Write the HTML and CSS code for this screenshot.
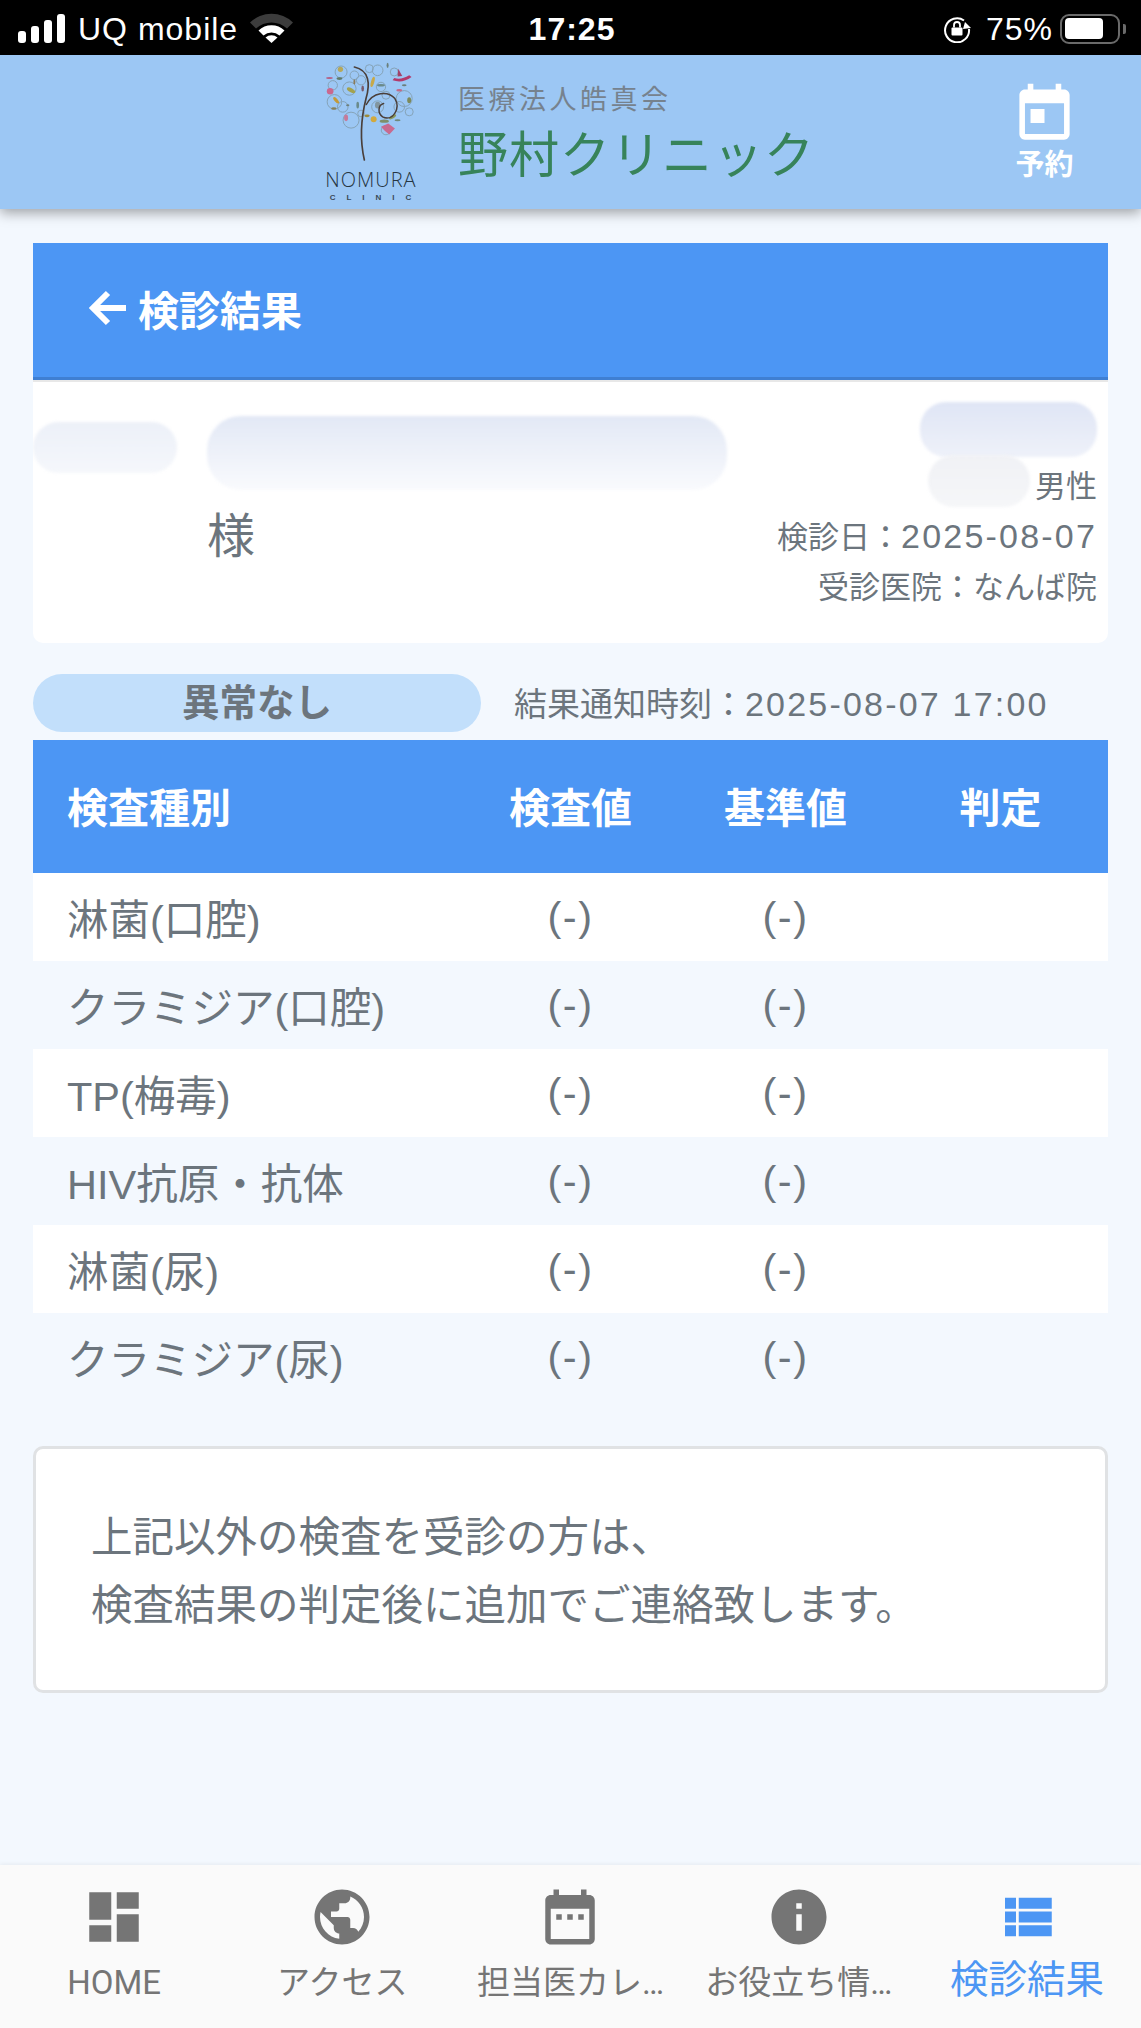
FILE: index.html
```html
<!DOCTYPE html>
<html lang="ja">
<head>
<meta charset="utf-8">
<title>検診結果</title>
<link rel="stylesheet" href="styles.css">
</head>
<body>
<div class="page">
  <div class="statusbar">
    <div class="st-left">
      <span class="signal"><i class="b1"></i><i class="b2"></i><i class="b3"></i><i class="b4"></i></span>
      <span class="carrier">UQ mobile</span>
      <svg class="wifi" viewBox="0 0 43 30"><path d="M0 9.500 A31 31 0 0 1 43 9.500 L37 15.500 A23 23 0 0 0 6 15.500 Z" fill="#3c3c3c"/><path d="M8.500 17.500 A19 19 0 0 1 34.500 17.500 L29.500 22.500 A12 12 0 0 0 13.500 22.500 Z" fill="#fff"/><path d="M15.500 24.500 A9 9 0 0 1 27.500 24.500 L21.500 30 Z" fill="#fff"/></svg>
    </div>
    <div class="st-time">17:25</div>
    <div class="st-right">
      <svg class="lock" viewBox="0 0 28 28"><path d="M21 5.500 A12 12 0 1 0 26 14" fill="none" stroke="#fff" stroke-width="2"/><path d="M22 7 L28 13 L20 14 Z" fill="#fff"/><rect x="8.500" y="12.500" width="11" height="8" rx="1" fill="#fff"/><path d="M11 12.500 V10 A3 3 0 0 1 17 10 V12.500" fill="none" stroke="#fff" stroke-width="1.800"/></svg>
      <span class="pct">75%</span>
      <span class="battery"><span class="battery-fill"></span></span><span class="battery-tip"></span>
    </div>
  </div>

  <header class="appbar">
    <div class="logo">
      <svg class="tree" viewBox="85 40 270 310">
        <g fill="none" stroke="#7f9aa8" stroke-width="3" opacity=".8">
          <circle cx="130" cy="70" r="18"/><circle cx="240" cy="65" r="16"/><circle cx="110" cy="160" r="22"/><circle cx="160" cy="215" r="24"/>
          <circle cx="320" cy="150" r="24"/><circle cx="155" cy="120" r="20"/><circle cx="250" cy="115" r="14"/><circle cx="240" cy="175" r="18"/>
          <circle cx="290" cy="70" r="12"/><circle cx="265" cy="245" r="14"/><circle cx="335" cy="190" r="12"/><circle cx="190" cy="95" r="14"/>
          <circle cx="105" cy="110" r="14"/><circle cx="135" cy="175" r="16"/><circle cx="215" cy="60" r="12"/><circle cx="305" cy="175" r="16"/><circle cx="170" cy="80" r="13"/><circle cx="265" cy="140" r="12"/><circle cx="190" cy="195" r="10"/>
        </g>
        <g>
          <circle cx="97" cy="128" r="10" fill="#c9688f"/><circle cx="128" cy="62" r="8" fill="#b6a85a"/><path d="M285 95 Q315 105 342 85 L335 80 Q310 95 290 88Z" fill="#b23a6c"/>
          <path d="M302 60 L314 82 L300 84Z" fill="#a2406a"/><circle cx="228" cy="212" r="9" fill="#d2a93d"/><path d="M250 235 L272 225 L292 240 L275 258 L262 248Z" fill="#c86a90"/>
          <ellipse cx="160" cy="125" rx="14" ry="6" fill="#a3a24f" transform="rotate(30 160 125)"/><ellipse cx="115" cy="155" rx="12" ry="5" fill="#c39a3a" transform="rotate(50 115 155)"/>
          <ellipse cx="225" cy="100" rx="5" ry="16" fill="#c7a94a" transform="rotate(15 225 100)"/><ellipse cx="260" cy="218" rx="14" ry="5" fill="#7f8f6a"/>
          <ellipse cx="108" cy="180" rx="8" ry="4" fill="#88815a"/><ellipse cx="145" cy="208" rx="6" ry="10" fill="#c77a9a"/><ellipse cx="125" cy="90" rx="9" ry="4" fill="#5f7a6a"/>
          <ellipse cx="208" cy="202" rx="8" ry="4" fill="#9c8a3a"/><ellipse cx="305" cy="125" rx="9" ry="4" fill="#c06a8a"/><ellipse cx="335" cy="155" rx="6" ry="9" fill="#7c8a5a"/>
          <ellipse cx="250" cy="110" rx="12" ry="4" fill="#6a8a8a"/><ellipse cx="270" cy="50" rx="3" ry="8" fill="#6a7f7a"/><ellipse cx="195" cy="120" rx="4" ry="9" fill="#7a5a6a"/>
          <ellipse cx="285" cy="205" rx="12" ry="5" fill="#8a9a5a" transform="rotate(-30 285 205)"/><ellipse cx="180" cy="170" rx="4" ry="10" fill="#6a8a8a"/><ellipse cx="95" cy="88" rx="10" ry="3" fill="#b3658a"/>
          <ellipse cx="240" cy="170" rx="8" ry="10" fill="#8296a0"/><ellipse cx="150" cy="170" rx="5" ry="3" fill="#6d7f7a"/><ellipse cx="320" cy="110" rx="7" ry="3" fill="#6a7f7a"/><ellipse cx="170" cy="100" rx="3" ry="8" fill="#8a7a5a"/><ellipse cx="300" cy="215" rx="9" ry="3" fill="#6f8a7a"/>
        </g>
        <path d="M200 335 C185 270 190 210 205 150 C218 105 215 65 170 55" fill="none" stroke="#4a3f3a" stroke-width="5" stroke-linecap="round"/>
        <path d="M206 168 C225 130 270 125 292 150 C310 180 285 220 255 205 C240 195 240 170 258 165" fill="none" stroke="#4a3f3a" stroke-width="4.500" stroke-linecap="round"/>
      </svg>
      <div class="logo-name">NOMURA</div>
      <div class="logo-sub">CLINIC</div>
    </div>
    <div class="brand">
      <div class="brand-org">医療法人皓真会</div>
      <div class="brand-name">野村クリニック</div>
    </div>
    <a class="reserve">
      <svg class="reserve-icon" viewBox="0 0 24 24"><path d="M19 3h-1V1h-2v2H8V1H6v2H5c-1.110 0-1.990.9-1.990 2L3 19c0 1.100.89 2 2 2h14c1.100 0 2-.9 2-2V5c0-1.100-.9-2-2-2zm0 16H5V8h14v11zM7 10h5v5H7z"/></svg>
      <span class="reserve-label">予約</span>
    </a>
  </header>

  <main class="content">
    <section class="card">
      <div class="card-title">
        <svg class="back" viewBox="0 0 40 36"><path d="M38 18H6M20 3 5 18l15 15" fill="none" stroke="#fff" stroke-width="6"/></svg>
        <span>検診結果</span>
      </div>
      <div class="patient">
        <div class="patient-left">
          <div class="name-row">
            <span class="blot blot-a"></span>
            <span class="blot blot-b"></span>
          </div>
          <div class="sama">様</div>
        </div>
        <div class="patient-right">
          <span class="blot blot-c"></span>
          <div class="gender-row">
            <span class="blot blot-d"></span>
            <span class="info-line">男性</span>
          </div>
          <div class="info-line date-line">検診日：<span class="num">2025-08-07</span></div>
          <div class="info-line clinic-line">受診医院：なんば院</div>
        </div>
      </div>
    </section>

    <div class="result-row">
      <div class="badge">異常なし</div>
      <div class="notified">結果通知時刻：<span class="num">2025-08-07 17:00</span></div>
    </div>

    <div class="table">
      <div class="tr th">
        <div class="c-name">検査種別</div><div class="c-val">検査値</div><div class="c-val">基準値</div><div class="c-val">判定</div>
      </div>
      <div class="tr td odd"><div class="c-name">淋菌(口腔)</div><div class="c-val">(-)</div><div class="c-val">(-)</div><div class="c-val"></div></div>
      <div class="tr td"><div class="c-name">クラミジア(口腔)</div><div class="c-val">(-)</div><div class="c-val">(-)</div><div class="c-val"></div></div>
      <div class="tr td odd"><div class="c-name">TP(梅毒)</div><div class="c-val">(-)</div><div class="c-val">(-)</div><div class="c-val"></div></div>
      <div class="tr td"><div class="c-name">HIV抗原・抗体</div><div class="c-val">(-)</div><div class="c-val">(-)</div><div class="c-val"></div></div>
      <div class="tr td odd"><div class="c-name">淋菌(尿)</div><div class="c-val">(-)</div><div class="c-val">(-)</div><div class="c-val"></div></div>
      <div class="tr td"><div class="c-name">クラミジア(尿)</div><div class="c-val">(-)</div><div class="c-val">(-)</div><div class="c-val"></div></div>
    </div>

    <div class="note">
      <p>上記以外の検査を受診の方は、</p>
      <p>検査結果の判定後に追加でご連絡致します。</p>
    </div>
  </main>

  <nav class="tabs">
    <a class="tab">
      <svg class="tab-icon" viewBox="0 0 24 24"><path d="M3 13h8V3H3v10zm0 8h8v-6H3v6zm10 0h8V11h-8v10zm0-18v6h8V3h-8z"/></svg>
      <span class="tab-label">HOME</span>
    </a>
    <a class="tab">
      <svg class="tab-icon" viewBox="0 0 24 24"><path d="M12 2C6.480 2 2 6.480 2 12s4.480 10 10 10 10-4.480 10-10S17.520 2 12 2zm-1 17.930c-3.950-.49-7-3.850-7-7.930 0-.62.08-1.210.21-1.790L9 15v1c0 1.100.9 2 2 2v1.930zm6.900-2.540c-.26-.81-1-1.390-1.900-1.390h-1v-3c0-.55-.45-1-1-1H8v-2h2c.55 0 1-.45 1-1V7h2c1.100 0 2-.9 2-2v-.41c2.930 1.190 5 4.060 5 7.410 0 2.080-.8 3.970-2.100 5.390z"/></svg>
      <span class="tab-label">アクセス</span>
    </a>
    <a class="tab">
      <svg class="tab-icon" viewBox="0 0 24 24"><path d="M9 11H7v2h2v-2zm4 0h-2v2h2v-2zm4 0h-2v2h2v-2zm2-7h-1V2h-2v2H8V2H6v2H5c-1.110 0-1.990.9-1.990 2L3 20c0 1.100.89 2 2 2h14c1.100 0 2-.9 2-2V6c0-1.100-.9-2-2-2zm0 16H5V9h14v11z"/></svg>
      <span class="tab-label">担当医カレ…</span>
    </a>
    <a class="tab">
      <svg class="tab-icon" viewBox="0 0 24 24"><path d="M12 2C6.480 2 2 6.480 2 12s4.480 10 10 10 10-4.480 10-10S17.520 2 12 2zm1 15h-2v-6h2v6zm0-8h-2V7h2v2z"/></svg>
      <span class="tab-label">お役立ち情…</span>
    </a>
    <a class="tab active">
      <svg class="tab-icon" viewBox="0 0 24 24"><path d="M4 14h4v-4H4v4zm0 5h4v-4H4v4zm0-10h4V5H4v4zm5 5h12v-4H9v4zm0 5h12v-4H9v4zM9 5v4h12V5H9z"/></svg>
      <span class="tab-label">検診結果</span>
    </a>
  </nav>
</div>
</body>
</html>
```
FILE: styles.css
```css
* { box-sizing: border-box; }
html, body { margin: 0; padding: 0; }
body {
  font-family: "Liberation Sans", "Noto Sans CJK JP", sans-serif;
  color: #6c757d;
  background: #f3f8fe;
}
p { margin: 0; }
.page { width: 1141px; height: 2028px; display: flex; flex-direction: column; overflow: hidden; }

/* status bar */
.statusbar {
  height: 55px; background: #000; color: #fff;
  display: grid; grid-template-columns: 1fr auto 1fr; align-items: center;
  padding: 2px 15px 0 18px; flex: none;
}
.st-left { display: flex; align-items: center; }
.signal { display: flex; align-items: flex-end; gap: 5px; height: 29px; width: 48px; }
.signal i { display: block; width: 8px; background: #fff; border-radius: 3px; }
.signal .b1 { height: 12px; }
.signal .b2 { height: 17px; }
.signal .b3 { height: 23px; }
.signal .b4 { height: 29px; }
.carrier { font-size: 32px; letter-spacing: 1px; margin-left: 12px; line-height: 1; }
.wifi { width: 43px; height: 30px; margin-left: 12px; margin-top: -2px; }
.st-time { font-size: 32px; font-weight: 700; line-height: 1; letter-spacing: 1px; }
.st-right { display: flex; align-items: center; justify-content: flex-end; }
.lock { width: 28px; height: 28px; }
.pct { font-size: 32px; letter-spacing: 1px; margin-left: 15px; line-height: 1; }
.battery { width: 60px; height: 30px; border: 2.500px solid #6a6a6a; border-radius: 9px; padding: 2.500px; margin-left: 7px; display: block; }
.battery-fill { display: block; width: 38px; height: 100%; background: #fff; border-radius: 4px; }
.battery-tip { width: 3px; height: 10px; background: #6a6a6a; border-radius: 0 2px 2px 0; margin-left: 3px; }

/* app bar */
.appbar {
  height: 154px; background: #9cc7f4; flex: none;
  display: flex; align-items: flex-start;
  padding-left: 325px; padding-right: 63px;
  box-shadow: 0 4px 12px rgba(0, 0, 0, .35);
  position: relative;
}
.logo { width: 92px; padding-top: 7px; display: flex; flex-direction: column; align-items: center; }
.tree { width: 90px; height: 103px; display: block; filter: blur(.35px); }
.logo-name { font-family: "Open Sans", sans-serif; font-weight: 300; font-size: 20px; line-height: 20px; letter-spacing: 1px; color: #263542; margin-top: 5px; }
.logo-sub { font-family: "Liberation Sans", sans-serif; font-size: 8px; line-height: 8px; letter-spacing: 11px; margin-right: -10px; color: #3a4a58; margin-top: 4px; white-space: nowrap; font-weight: 700; }
.brand { margin-left: 41px; padding-top: 23px; }
.brand-org { font-size: 27px; line-height: 40px; letter-spacing: 3.500px; color: #76828e; font-family: "Noto Sans CJK JP", sans-serif; font-weight: 400; }
.brand-name { font-size: 50px; line-height: 66px; color: #37835a; letter-spacing: 1px; font-family: "Noto Sans CJK JP", sans-serif; font-weight: 400; }
.reserve { margin-left: auto; width: 67px; display: flex; flex-direction: column; align-items: center; padding-top: 26px; }
.reserve-icon { width: 67px; height: 67px; fill: #fff; display: block; }
.reserve-label { color: #fff; font-size: 29px; font-weight: 700; line-height: 34px; white-space: nowrap; }

/* content */
.content { flex: 1; padding: 34px 33px 0; }
.card { background: #fff; border-radius: 0 0 10px 10px; overflow: hidden; }
.card-title {
  height: 137px; background: #4c96f4; border-bottom: 3px solid #3f7fd2;
  color: #fff; font-size: 41px; font-weight: 700;
  display: flex; align-items: center; padding: 0 0 4px 55px;
}
.back { width: 40px; height: 36px; margin-right: 10px; }
.patient { height: 263px; display: flex; justify-content: space-between; align-items: flex-start; border-top: 2px solid #e8e8e8; }
.patient-left { padding-top: 34px; }
.name-row { display: flex; gap: 30px; align-items: flex-start; }
.blot { display: block; background: linear-gradient(#e2e8f5, #f9fafd); border-radius: 26px; filter: blur(1.500px); }
.blot-a { width: 144px; height: 51px; margin-top: 6px; background: linear-gradient(#ecf0f8, #f5f7fb); }
.blot-b { width: 520px; height: 74px; border-radius: 34px; }
.blot-c { width: 177px; height: 55px; background: linear-gradient(#dfe5f5, #eef1f9); }
.blot-d { width: 102px; height: 52px; background: linear-gradient(#f0f1f5, #f5f6f8); margin-right: 5px; }
.sama { font-size: 48px; line-height: 60px; margin-top: 17px; margin-left: 174px; }
.patient-right { padding: 20px 11px 0 0; display: flex; flex-direction: column; align-items: flex-end; }
.gender-row { display: flex; align-items: flex-end; margin-top: -2px; }
.info-line { font-size: 31px; line-height: 40px; white-space: nowrap; }
.date-line { margin-top: 9px; }
.clinic-line { margin-top: 10px; }
.num { font-size: 34px; letter-spacing: 2.200px; }

.result-row { display: flex; align-items: center; margin-top: 31px; height: 58px; }
.badge {
  width: 448px; height: 58px; border-radius: 29px; background: #c2dffb;
  font-size: 37.500px; font-weight: 700; line-height: 58px; text-align: center;
}
.notified { font-size: 33px; margin-left: 33px; padding-bottom: 3px; white-space: nowrap; }

.table { margin-top: 8px; }
.tr { display: grid; grid-template-columns: 2fr 1fr 1fr 1fr; align-items: center; }
.th { height: 133px; background: #4c96f4; color: #fff; font-size: 41px; font-weight: 700; padding-bottom: 3px; }
.td { height: 88px; font-size: 41.500px; }
.td.odd { background: #fff; }
.td .c-val { letter-spacing: 1.500px; }
.c-name { padding-left: 34px; white-space: nowrap; }
.c-val { text-align: center; }

.note {
  margin-top: 45px; height: 247px; background: #fff;
  border: 3px solid #e0e2e4; border-radius: 10px;
  padding: 55px 55px 0; font-size: 41.500px; line-height: 68px;
}

/* bottom tabs */
.tabs {
  height: 163px; flex: none; background: #fafafa;
  display: grid; grid-template-columns: repeat(5, 1fr);
  box-shadow: 0 -1px 4px rgba(0, 0, 0, .06);
  position: relative;
}
.tab { display: flex; flex-direction: column; align-items: center; padding-top: 19px; color: #757575; min-width: 0; }
.tab-icon { width: 66px; height: 66px; fill: #757575; display: block; flex: none; }
.tab-label { font-family: Roboto, "Noto Sans CJK JP", sans-serif; font-size: 33px; line-height: 40px; margin-top: 13px; white-space: nowrap; }
.tab.active { color: #4c96f4; }
.tab.active .tab-icon { fill: #4c96f4; }
.tab.active .tab-label { font-size: 38.500px; margin-top: 10px; }
```
